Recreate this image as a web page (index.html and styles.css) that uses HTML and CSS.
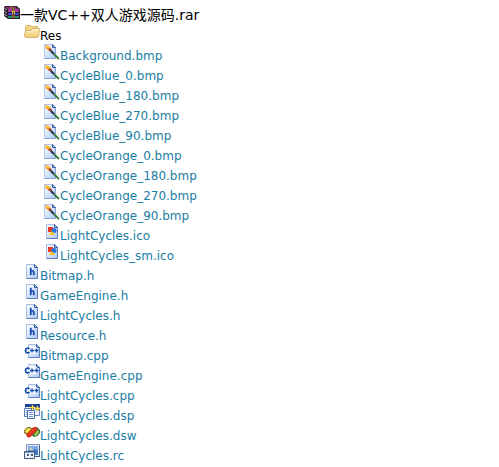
FILE: index.html
```
<!DOCTYPE html>
<html lang="zh-CN">
<head>
    <meta charset="UTF-8">
    <meta name="viewport" content="width=device-width, initial-scale=1.0">
    <title>一款VC++双人游戏源码.rar</title>
    <link rel="stylesheet" href="styles.css">
</head>
<body>
    <svg class="sprite" aria-hidden="true">
        <defs>
            <linearGradient id="paper" x1="0" y1="0" x2="1" y2="1">
                <stop offset="0.1" stop-color="#f8fbff"/>
                <stop offset="1" stop-color="#a9c6f5"/>
            </linearGradient>
            <linearGradient id="manila" x1="0" y1="0" x2="0" y2="1">
                <stop offset="0" stop-color="#fdeeb9"/>
                <stop offset="1" stop-color="#f0c870"/>
            </linearGradient>
        </defs>
        <symbol id="rar" viewBox="0 0 16 16">
            <path d="M0 3L1 2H13L16 5V15H4L0 12Z" fill="#2a1a2c"/>
            <path d="M1 3H12L14 5H4Z" fill="#8f3478"/>
            <path d="M4 5H15V8H4Z" fill="#a13c96"/>
            <path d="M4 9H15V11H4Z" fill="#3c48dc"/>
            <path d="M4 12H15V14H4Z" fill="#1f9a68"/>
            <path d="M0 4L3 6M0 7L3 9M0 10L3 12" stroke="#b9b3ad"/>
            <path d="M6 2H8L11 5V14H8V5Z" fill="#866238"/>
            <path d="M8 7H11V10H8Z" fill="#d9bd60"/>
            <path d="M9 8H10V12H9Z" fill="#55401c"/>
        </symbol>
        <symbol id="folder" viewBox="0 0 16 16">
            <path d="M1.500 12.500V2.500L2.500 1.500H6.500L7.500 2.500H13.500V5.500" fill="#f2d283" stroke="#d6b46c"/>
            <path d="M.5 12.500L1.500 6.500H7.500L8.500 4.500H15.500L14.500 12.500L13.500 13.500H1.500Z" fill="url(#manila)" stroke="#d8b468"/>
            <path d="M3 7.500H8L9 5.500H14.500" fill="none" stroke="#fff4cc"/>
        </symbol>
        <symbol id="page" viewBox="0 0 16 16">
            <path d="M2.500 .5H10.500L13.500 3.500V14.500H2.500Z" fill="url(#paper)" stroke="#a9bce3"/>
            <path d="M13.500 3.500V14.500H2.500" fill="none" stroke="#5f7db9"/>
            <path d="M10.500 .5V3.500H13.500Z" fill="#c3d4f3" stroke="#3f5fa3"/>
        </symbol>
        <symbol id="bmp" viewBox="0 0 16 16">
            <path d="M.5 .5H8.500L11.500 3.500V14.500H.5Z" fill="url(#paper)" stroke="#b4c6e9"/>
            <path d="M11.500 3.500V14.500H.5" fill="none" stroke="#86a1d4"/>
            <path d="M8.500 .5V3.500H11.500Z" fill="#c3d4f3" stroke="#3f5fa3"/>
            <path d="M1 1L5 2L7 5L5 6L2 5Z" fill="#f6a51c"/>
            <path d="M2 2L5 4" stroke="#ffdc54"/>
            <path d="M4 6L6 4L8 6L7 8Z" fill="#9b4028"/>
            <path d="M7 7L10 10" stroke="#23304f" stroke-width="2"/>
            <path d="M10 10L15 15" stroke="#34702f" stroke-width="2"/>
            <path d="M11 10L15 14" stroke="#68ad55"/>
        </symbol>
        <symbol id="ico" viewBox="0 0 16 16">
            <use href="#page"/>
            <path d="M4 3H9V8H4Z" fill="#ed3a22"/>
            <circle cx="10" cy="6.500" r="2.500" fill="#2476e0"/>
            <path d="M8 7L11 11H5Z" fill="#f8c51e"/>
        </symbol>
        <symbol id="header" viewBox="0 0 16 16">
            <use href="#page"/>
            <path d="M6 4H7.500V6.500Q10.500 5.500 10.500 8V11H9V8Q8.500 7 7.500 8V11H6Z" fill="#174dab" stroke="#174dab" stroke-width=".3"/>
        </symbol>
        <symbol id="cpp" viewBox="0 0 16 16">
            <path d="M4.500 .5H12.500L15.500 3.500V13.500H4.500Z" fill="url(#paper)" stroke="#a9bce3"/>
            <path d="M15.500 3.500V13.500H4.500" fill="none" stroke="#5f7db9"/>
            <path d="M12.500 .5V3.500H15.500Z" fill="#c3d4f3" stroke="#3f5fa3"/>
            <path d="M3 3H13V10H3Z" fill="#f5f9ff"/>
            <path d="M5.500 5C4 3.500 1.500 4 1.500 6.500S4 9.500 5.500 8" fill="none" stroke="#174dab" stroke-width="1.800"/>
            <path d="M6 6.500H10M8 4.500V8.500M10.500 6.500H14.500M12.500 4.500V8.500" stroke="#174dab" stroke-width="1.300"/>
        </symbol>
        <symbol id="dsp" viewBox="0 0 16 16">
            <path d="M1.500 .5H15.500V11.500H1.500Z" fill="#e7effd" stroke="#6c87ba"/>
            <path d="M1 0H16V3H1Z" fill="#1d419f"/>
            <path d="M.5 4.500H7.500V12.500H.5Z" fill="#f5f9ff" stroke="#587bb9"/>
            <path d="M3.500 6.500H10.500V14.500H3.500Z" fill="#f5f9ff" stroke="#496eaf"/>
            <path d="M5 8.500H9M5 10.500H9M5 12.500H9M2 6.500H3M2 8.500H3M2 10.500H3" stroke="#6f91ca"/>
            <path d="M8.500 1V6M6 3.500H11M13.500 2V7M11 4.500H16" stroke="#6d642f" stroke-width="2"/>
            <path d="M8.500 1V6M6 3.500H11M13.500 2V7M11 4.500H16" stroke="#ffe04a"/>
        </symbol>
        <symbol id="dsw" viewBox="0 0 16 16">
            <path d="M.5 9C0 5 3 3 6 3.500L8 5L4 10Z" fill="#e5c728" stroke="#6d6022"/>
            <path d="M2 7L5 4.500L6 5L3 8Z" fill="#ffed8c"/>
            <path d="M10 4C13 3 16 5 15.500 8C15 11 12 13 9 12L8 10Z" fill="#36984b" stroke="#315a2c"/>
            <path d="M10 11L14 6L15 8L12 12Z" fill="#b4ca45"/>
            <path d="M2.500 11L9 4C11 3 14 4 13 6L7 12C5 14 3 13 2.500 11Z" fill="#e82e16" stroke="#b92a17"/>
            <path d="M4 11L10 5" stroke="#f0523a"/>
        </symbol>
        <symbol id="rc" viewBox="0 0 16 16">
            <path d="M2.500 .5H15.500V12.500H2.500Z" fill="#e4edf9" stroke="#8297b7"/>
            <path d="M4 2H14V11H4Z" fill="#4777c4"/>
            <path d="M4 2H14V6L11 5L8 7L4 6Z" fill="#7eacea"/>
            <path d="M5 6L7 3L9 6Z" fill="#d3d7a5"/>
            <path d="M15.500 1V12.500H11" fill="none" stroke="#405878"/>
            <path d="M.5 7.500H10.500V14.500H.5Z" fill="#edf2fa" stroke="#405878"/>
            <path d="M1 8H10V9H1Z" fill="#8ba5cb"/>
            <path d="M3 10H5V12H3ZM7 10H9V12H7Z" fill="#3f587c"/>
        </symbol>
    </svg>

    <div class="archive">
        <h1><svg class="icon"><use href="#rar"/></svg>一款VC++双人游戏源码.rar</h1>
        <ul class="tree">
            <li>
                <svg class="icon"><use href="#folder"/></svg><span>Res</span>
                <ul class="tree">
                    <li><svg class="icon"><use href="#bmp"/></svg><a href="#">Background.bmp</a></li>
                    <li><svg class="icon"><use href="#bmp"/></svg><a href="#">CycleBlue_0.bmp</a></li>
                    <li><svg class="icon"><use href="#bmp"/></svg><a href="#">CycleBlue_180.bmp</a></li>
                    <li><svg class="icon"><use href="#bmp"/></svg><a href="#">CycleBlue_270.bmp</a></li>
                    <li><svg class="icon"><use href="#bmp"/></svg><a href="#">CycleBlue_90.bmp</a></li>
                    <li><svg class="icon"><use href="#bmp"/></svg><a href="#">CycleOrange_0.bmp</a></li>
                    <li><svg class="icon"><use href="#bmp"/></svg><a href="#">CycleOrange_180.bmp</a></li>
                    <li><svg class="icon"><use href="#bmp"/></svg><a href="#">CycleOrange_270.bmp</a></li>
                    <li><svg class="icon"><use href="#bmp"/></svg><a href="#">CycleOrange_90.bmp</a></li>
                    <li><svg class="icon"><use href="#ico"/></svg><a href="#">LightCycles.ico</a></li>
                    <li><svg class="icon"><use href="#ico"/></svg><a href="#">LightCycles_sm.ico</a></li>
                </ul>
            </li>
            <li><svg class="icon"><use href="#header"/></svg><a href="#">Bitmap.h</a></li>
            <li><svg class="icon"><use href="#header"/></svg><a href="#">GameEngine.h</a></li>
            <li><svg class="icon"><use href="#header"/></svg><a href="#">LightCycles.h</a></li>
            <li><svg class="icon"><use href="#header"/></svg><a href="#">Resource.h</a></li>
            <li><svg class="icon"><use href="#cpp"/></svg><a href="#">Bitmap.cpp</a></li>
            <li><svg class="icon"><use href="#cpp"/></svg><a href="#">GameEngine.cpp</a></li>
            <li><svg class="icon"><use href="#cpp"/></svg><a href="#">LightCycles.cpp</a></li>
            <li><svg class="icon"><use href="#dsp"/></svg><a href="#">LightCycles.dsp</a></li>
            <li><svg class="icon"><use href="#dsw"/></svg><a href="#">LightCycles.dsw</a></li>
            <li><svg class="icon"><use href="#rc"/></svg><a href="#">LightCycles.rc</a></li>
        </ul>
    </div>
</body>
</html>
```
FILE: styles.css
```
body {
    margin: 0;
    background-color: #ffffff;
    color: #000000;
    font-family: "DejaVu Sans", "Noto Sans CJK SC", sans-serif;
    font-size: 12px;
    line-height: 16px;
}
.sprite {
    display: block;
    width: 0;
    height: 0;
}
.archive {
    padding: 4px 4px 0;
}
h1 {
    margin: 0;
    font-size: 14px;
    font-weight: normal;
    line-height: 18px;
    white-space: nowrap;
}
.tree {
    margin: 0;
    padding-left: 20px;
    list-style: none;
}
.icon {
    width: 16px;
    height: 16px;
    vertical-align: baseline;
}
a {
    color: #1a7da3;
    text-decoration: none;
}
a:hover {
    text-decoration: underline;
}
```
